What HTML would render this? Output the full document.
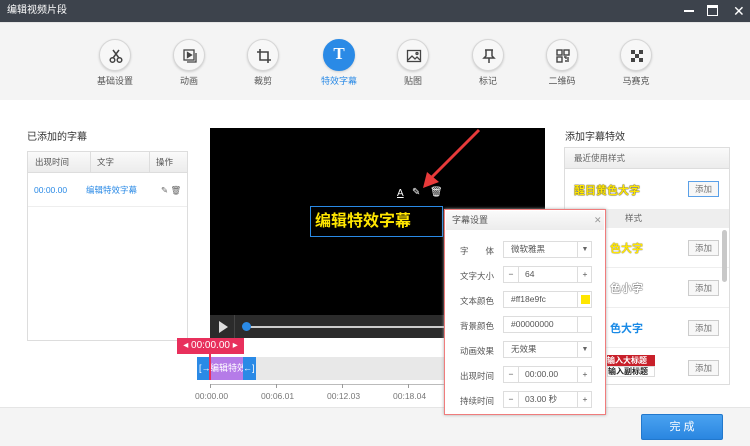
<!DOCTYPE html>
<html><head><meta charset="utf-8"><style>
*{margin:0;padding:0;box-sizing:border-box}
body{width:750px;height:446px;overflow:hidden;position:relative;background:#fff;font-family:"Liberation Sans","Noto Sans CJK SC",sans-serif;font-size:9px;color:#555}
.a{position:absolute}
.tb{left:0;top:0;width:750px;height:22px;background:#3d434c;color:#fff;font-size:10px;line-height:22px;padding-left:7px}
.tool{left:0;top:22px;width:750px;height:78px;background:#f4f4f4;border-top:1px solid #e5e5e5}
.ic{width:32px;height:32px;border-radius:50%;background:#f7f7f7;border:1px solid #d6d6d6;box-shadow:0 1px 2px #ccc;top:39px}
.ic svg{position:absolute;left:8px;top:8px}
.lb{top:74px;width:70px;text-align:center;font-size:9px;color:#555}
.th{background:linear-gradient(#fafafa,#ececec);border-bottom:1px solid #ddd;height:21px;line-height:21px}
.dr{left:460px;font-size:8.5px;color:#555}
.fld{left:503px;width:89px;height:17px;border:1px solid #ddd;background:#fff;font-size:8.5px;line-height:15px;color:#555}
.btn{width:31px;height:16px;border:1px solid #ccc;background:#f7f7f7;font-size:8.5px;text-align:center;line-height:14px;color:#777}
</style></head><body>
<div class="a tb">编辑视频片段
<span class="a" style="left:684px;top:10px;width:10px;height:2px;background:#fff"></span>
<span class="a" style="left:707px;top:5px;width:11px;height:11px;border:1.5px solid #fff;border-top-width:3px"></span>
<span class="a" style="left:733px;top:0;font-size:14px">✕</span>
</div>
<div class="a tool"></div>
<!-- icons -->
<div class="a ic" style="left:99px"><svg width="16" height="16" viewBox="0 0 16 16" fill="none" stroke="#444" stroke-width="1.5"><path d="M5 2l6 8M11 2l-6 8"/><circle cx="4.5" cy="12" r="2.3"/><circle cx="11.5" cy="12" r="2.3"/></svg></div>
<div class="a ic" style="left:173px"><svg width="16" height="16" viewBox="0 0 16 16" fill="none" stroke="#444" stroke-width="1.3"><rect x="2" y="2" width="10" height="10"/><path d="M5 14h9V5"/><path d="M5.5 4.5v5l4-2.5z" fill="#444"/></svg></div>
<div class="a ic" style="left:247px"><svg width="16" height="16" viewBox="0 0 16 16" fill="none" stroke="#444" stroke-width="1.6"><path d="M4 1v11h11M1 4h11v11"/></svg></div>
<div class="a ic" style="left:323px;background:#2a8ae6;border-color:#2a8ae6"><span class="a" style="left:0;top:4px;width:30px;text-align:center;color:#fff;font:bold 17px 'Liberation Serif',serif">T</span></div>
<div class="a ic" style="left:397px"><svg width="16" height="16" viewBox="0 0 16 16" fill="none" stroke="#444" stroke-width="1.3"><rect x="1.5" y="2.5" width="13" height="11"/><path d="M2 12l4-4 3 3 2-2 3 3" /><circle cx="11" cy="5.5" r="1"/></svg></div>
<div class="a ic" style="left:472px"><svg width="16" height="16" viewBox="0 0 16 16" fill="none" stroke="#444" stroke-width="1.5"><path d="M4 2h8M5 2v6l-2 2h10l-2-2V2M8 10v5"/></svg></div>
<div class="a ic" style="left:546px"><svg width="16" height="16" viewBox="0 0 16 16" fill="none" stroke="#444" stroke-width="1.4"><rect x="2" y="2" width="5" height="5"/><rect x="9" y="2" width="5" height="5"/><rect x="2" y="9" width="5" height="5"/><path d="M9 9h2v2M13 9v5M10 13h2"/></svg></div>
<div class="a ic" style="left:620px"><svg width="16" height="16" viewBox="0 0 16 16" fill="#444"><rect x="2" y="2" width="4" height="4"/><rect x="10" y="2" width="4" height="4"/><rect x="6" y="6" width="4" height="4"/><rect x="2" y="10" width="4" height="4"/><rect x="10" y="10" width="4" height="4"/></svg></div>
<div class="a lb" style="left:80px">基础设置</div>
<div class="a lb" style="left:154px">动画</div>
<div class="a lb" style="left:228px">裁剪</div>
<div class="a lb" style="left:304px;color:#2a8ae6">特效字幕</div>
<div class="a lb" style="left:378px">贴图</div>
<div class="a lb" style="left:453px">标记</div>
<div class="a lb" style="left:527px">二维码</div>
<div class="a lb" style="left:601px">马赛克</div>

<!-- left -->
<div class="a" style="left:27px;top:128px;font-size:10px;color:#333">已添加的字幕</div>
<div class="a" style="left:27px;top:151px;width:161px;height:190px;border:1px solid #ddd">
 <div class="th" style="font-size:8.5px;position:relative"><span class="a" style="left:7px">出现时间</span><span class="a" style="left:62px;border-left:1px solid #ddd;padding-left:6px;height:21px">文字</span><span class="a" style="left:121px;border-left:1px solid #ddd;padding-left:6px;height:21px">操作</span></div>
 <div style="position:relative;height:34px;border-bottom:1px solid #eee;color:#2a8ae6;font-size:8.5px;line-height:34px"><span class="a" style="left:6px">00:00.00</span><span class="a" style="left:58px">编辑特效字幕</span><span class="a" style="left:133px;color:#666">✎ 🗑</span></div>
</div>

<!-- video -->
<div class="a" style="left:210px;top:128px;width:335px;height:187px;background:#000"></div>
<div class="a" style="left:210px;top:315px;width:335px;height:23px;background:#2b2b2b"><div class="a" style="left:24px;top:0;width:1px;height:23px;background:#444"></div><div class="a" style="left:9px;top:6px;width:0;height:0;border-left:9px solid #ddd;border-top:6px solid transparent;border-bottom:6px solid transparent"></div><div class="a" style="left:36px;top:11px;width:300px;height:2px;background:#ccc"></div><div class="a" style="left:32px;top:7px;width:9px;height:9px;border-radius:50%;background:#2a8ae6"></div></div>
<div class="a" style="left:310px;top:206px;width:133px;height:31px;border:1px solid #2a8ae6"></div>
<div class="a" style="left:315px;top:207px;color:#ffe600;font-weight:bold;font-size:16px">编辑特效字幕</div>
<div class="a" style="left:397px;top:188px;color:#fff;font-size:10px;text-decoration:underline">A</div>
<div class="a" style="left:412px;top:187px;color:#fff;font-size:10px">✎</div>
<div class="a" style="left:430px;top:187px;color:#fff;font-size:10px">🗑</div>
<svg class="a" style="left:415px;top:128px" width="66" height="62"><path d="M64 2L14 52" stroke="#e83a3a" stroke-width="3"/><path d="M8 60l4-16 12 10z" fill="#e83a3a"/></svg>

<!-- timeline -->
<div class="a" style="left:197px;top:357px;width:250px;height:23px;background:#e8e8e8"></div>
<div class="a" style="left:197px;top:357px;width:13px;height:23px;background:#2a8ae6;color:#fff;font-size:9px;line-height:23px;padding-left:2px">[→</div>
<div class="a" style="left:210px;top:357px;width:33px;height:23px;background:#b57be8;color:#fff;font-size:9px;line-height:23px;overflow:hidden;white-space:nowrap">编辑特效</div>
<div class="a" style="left:243px;top:357px;width:13px;height:23px;background:#2a8ae6;color:#fff;font-size:9px;line-height:23px">←]</div>
<div class="a" style="left:209px;top:353px;width:2px;height:27px;background:#e8305c"></div>
<div class="a" style="left:177px;top:338px;width:67px;height:16px;background:#e8305c;color:#fff;font-size:10px;line-height:16px;text-align:center">◂ 00:00.00 ▸</div>
<div class="a" style="left:210px;top:384px;width:240px;height:1px;background:#bbb"></div>
<div class="a" style="left:210px;top:384px;width:1px;height:4px;background:#999"></div>
<div class="a" style="left:276px;top:384px;width:1px;height:4px;background:#999"></div>
<div class="a" style="left:342px;top:384px;width:1px;height:4px;background:#999"></div>
<div class="a" style="left:408px;top:384px;width:1px;height:4px;background:#999"></div>
<div class="a" style="left:195px;top:391px;font-size:8.5px;color:#777">00:00.00</div>
<div class="a" style="left:261px;top:391px;font-size:8.5px;color:#777">00:06.01</div>
<div class="a" style="left:327px;top:391px;font-size:8.5px;color:#777">00:12.03</div>
<div class="a" style="left:393px;top:391px;font-size:8.5px;color:#777">00:18.04</div>

<!-- right panel -->
<div class="a" style="left:565px;top:128px;font-size:10px;color:#333">添加字幕特效</div>
<div class="a" style="left:564px;top:147px;width:166px;height:238px;border:1px solid #ddd;overflow:hidden">
 <div class="th" style="font-size:8.5px;padding-left:9px;color:#666">最近使用样式</div>
 <div style="height:40px;position:relative"><span class="a" style="left:9px;top:13px;color:#ffe600;font-weight:bold;font-size:11px;text-shadow:0 0 1px #333,0 0 1px #333">醒目黄色大字</span><span class="a btn" style="left:123px;top:12px;border-color:#5aa0e8">添加</span></div>
 <div style="height:19px;background:#eee;font-size:8.5px;line-height:19px;padding-left:60px;color:#666">样式</div>
 <div style="height:40px;position:relative;border-bottom:1px solid #eee"><span class="a" style="left:45px;top:12px;color:#ffe600;font-weight:bold;font-size:11px;text-shadow:0 0 1px #333">色大字</span><span class="a btn" style="left:123px;top:12px">添加</span></div>
 <div style="height:40px;position:relative;border-bottom:1px solid #eee"><span class="a" style="left:45px;top:12px;color:#fff;font-weight:bold;font-size:11px;text-shadow:0 0 1px #333,0 0 1px #333">色小字</span><span class="a btn" style="left:123px;top:12px">添加</span></div>
 <div style="height:40px;position:relative;border-bottom:1px solid #eee"><span class="a" style="left:45px;top:12px;color:#1a8ae6;font-weight:bold;font-size:11px">色大字</span><span class="a btn" style="left:123px;top:12px">添加</span></div>
 <div style="height:40px;position:relative"><span class="a" style="left:42px;top:7px;width:48px;height:11px;background:#c8202a;color:#fff;font-size:8px;font-weight:bold;line-height:11px">输入大标题</span><span class="a" style="left:42px;top:18px;width:48px;height:11px;border:1px solid #ddd;color:#222;font-size:8px;font-weight:bold;line-height:9px">输入副标题</span><span class="a btn" style="left:123px;top:12px">添加</span></div>
 <div class="a" style="left:157px;top:82px;width:5px;height:52px;background:#c8c8c8;border-radius:3px"></div>
</div>

<!-- dialog -->
<div class="a" style="left:444px;top:209px;width:162px;height:206px;background:#fff;box-shadow:0 0 3px #aaa;border:1px solid #f07c7c"></div>
<div class="a" style="left:446px;top:211px;width:158px;height:19px;background:linear-gradient(#fafafa,#ececec);font-size:9px;line-height:19px;padding-left:6px;color:#555">字幕设置<span class="a" style="left:148px;top:0;color:#999">✕</span></div>
<div class="a dr" style="top:245px">字　　体</div>
<div class="a fld" style="top:241px;padding-left:7px">微软雅黑<span class="a" style="left:73px;top:0;width:15px;height:15px;border-left:1px solid #ddd;text-align:center;font-size:7px;color:#666">▼</span></div>
<div class="a dr" style="top:270px">文字大小</div>
<div class="a fld" style="top:266px"><span class="a" style="left:0;width:15px;text-align:center;border-right:1px solid #ddd;height:15px">−</span><span class="a" style="left:21px">64</span><span class="a" style="left:73px;width:15px;text-align:center;border-left:1px solid #ddd;height:15px">+</span></div>
<div class="a dr" style="top:295px">文本颜色</div>
<div class="a fld" style="top:291px;padding-left:7px">#ff18e9fc<span class="a" style="left:73px;top:0;width:15px;height:15px;border-left:1px solid #ddd"><span class="a" style="left:3px;top:3px;width:9px;height:9px;background:#ffe600"></span></span></div>
<div class="a dr" style="top:320px">背景颜色</div>
<div class="a fld" style="top:316px;padding-left:7px">#00000000<span class="a" style="left:73px;top:0;width:15px;height:15px;border-left:1px solid #ddd"></span></div>
<div class="a dr" style="top:345px">动画效果</div>
<div class="a fld" style="top:341px;padding-left:7px">无效果<span class="a" style="left:73px;top:0;width:15px;height:15px;border-left:1px solid #ddd;text-align:center;font-size:7px;color:#666">▼</span></div>
<div class="a dr" style="top:370px">出现时间</div>
<div class="a fld" style="top:366px"><span class="a" style="left:0;width:15px;text-align:center;border-right:1px solid #ddd;height:15px">−</span><span class="a" style="left:21px">00:00.00</span><span class="a" style="left:73px;width:15px;text-align:center;border-left:1px solid #ddd;height:15px">+</span></div>
<div class="a dr" style="top:395px">持续时间</div>
<div class="a fld" style="top:391px"><span class="a" style="left:0;width:15px;text-align:center;border-right:1px solid #ddd;height:15px">−</span><span class="a" style="left:21px">03.00 秒</span><span class="a" style="left:73px;width:15px;text-align:center;border-left:1px solid #ddd;height:15px">+</span></div>

<!-- bottom -->
<div class="a" style="left:0;top:407px;width:750px;height:39px;background:#f4f4f4;border-top:1px solid #e5e5e5;z-index:-1"></div>
<div class="a" style="left:641px;top:414px;width:82px;height:26px;background:linear-gradient(#4aa2f0,#2a86e0);border:1px solid #2278cc;border-radius:2px;color:#fff;font-size:11px;text-align:center;line-height:24px">完 成</div>
</body></html>
